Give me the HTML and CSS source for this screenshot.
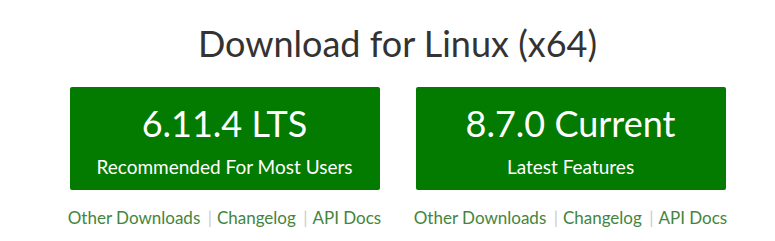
FILE: index.html
```html
<!DOCTYPE html>
<html lang="en">
<head>
    <meta charset="UTF-8">
    <title>Download Node.js</title>
    <link rel="stylesheet" href="styles.css">
</head>
<body>
    <div class="home-downloadblock">
        <h2 class="home-downloadhead">Download for Linux (x64)</h2>
        <div class="download-columns">
            <div class="download-col">
                <a class="home-downloadbutton" href="#">
                    <span class="version">6.11.4 LTS</span>
                    <small>Recommended For Most Users</small>
                </a>
                <ul class="list-divider-pipe">
                    <li><a href="#">Other Downloads</a></li>
                    <li><a href="#">Changelog</a></li>
                    <li><a href="#">API Docs</a></li>
                </ul>
            </div>
            <div class="download-col">
                <a class="home-downloadbutton" href="#">
                    <span class="version">8.7.0 Current</span>
                    <small>Latest Features</small>
                </a>
                <ul class="list-divider-pipe">
                    <li><a href="#">Other Downloads</a></li>
                    <li><a href="#">Changelog</a></li>
                    <li><a href="#">API Docs</a></li>
                </ul>
            </div>
        </div>
    </div>
</body>
</html>
```

FILE: styles.css
```css
body {
    margin: 0;
    background: #fff;
    font-family: 'Lato', sans-serif;
    color: #333;
}

.home-downloadblock {
    padding: 20px 0 0 20px;
    text-align: center;
}

.home-downloadhead {
    margin: 0 0 21px;
    font-size: 36px;
    font-weight: 400;
    line-height: 46px;
}

.download-columns {
    display: flex;
    justify-content: center;
    gap: 36px;
}

.download-col {
    width: 310px;
}

.home-downloadbutton {
    display: flex;
    flex-direction: column;
    align-items: center;
    height: 103px;
    box-sizing: border-box;
    padding-top: 13px;
    background: #037a00;
    border-radius: 2px;
    color: #fff;
    text-decoration: none;
}

.home-downloadbutton .version {
    font-size: 36px;
    line-height: 46px;
}

.home-downloadbutton small {
    margin-top: 9px;
    font-size: 19px;
    line-height: 24px;
}

.list-divider-pipe {
    list-style: none;
    margin: 16px -10px 0;
    padding: 0;
    font-size: 17px;
    line-height: 24px;
    white-space: nowrap;
}

.list-divider-pipe li {
    display: inline;
}

.list-divider-pipe li + li::before {
    content: "|";
    color: #ccc;
    margin: 0 5px 0 3px;
}

.list-divider-pipe a {
    color: #43853d;
    text-decoration: none;
}
```
